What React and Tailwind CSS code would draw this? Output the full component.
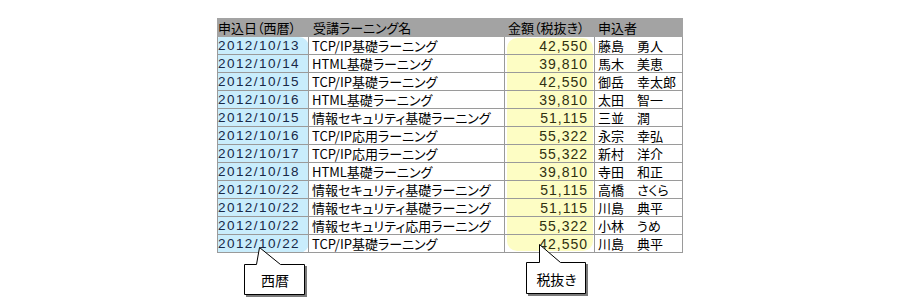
import React from "react";

const rows = [
  ["2012/10/13", "TCP/IP基礎ラーニング", "42,550", "藤島　勇人"],
  ["2012/10/14", "HTML基礎ラーニング", "39,810", "馬木　美恵"],
  ["2012/10/15", "TCP/IP基礎ラーニング", "42,550", "御岳　幸太郎"],
  ["2012/10/16", "HTML基礎ラーニング", "39,810", "太田　智一"],
  ["2012/10/15", "情報セキュリティ基礎ラーニング", "51,115", "三並　潤"],
  ["2012/10/16", "TCP/IP応用ラーニング", "55,322", "永宗　幸弘"],
  ["2012/10/17", "TCP/IP応用ラーニング", "55,322", "新村　洋介"],
  ["2012/10/18", "HTML基礎ラーニング", "39,810", "寺田　和正"],
  ["2012/10/22", "情報セキュリティ基礎ラーニング", "51,115", "高橋　さくら"],
  ["2012/10/22", "情報セキュリティ基礎ラーニング", "51,115", "川島　典平"],
  ["2012/10/22", "情報セキュリティ応用ラーニング", "55,322", "小林　うめ"],
  ["2012/10/22", "TCP/IP基礎ラーニング", "42,550", "川島　典平"],
];

const font = "font-['Noto_Sans_CJK_JP','Noto_Sans',sans-serif]";
const latin = "font-['Liberation_Sans','Noto_Sans_CJK_JP',sans-serif]";

export default function App() {
  return (
    <div className={`relative w-[900px] h-[297px] bg-white overflow-hidden ${font} text-black [font-feature-settings:'palt']`}>
      <div className="pl-[217px] pt-[18px]">
        <div className="relative w-[466px]">
          {/* highlight overlays */}
          <div className="absolute left-0 top-[19px] w-[92px] h-[216px] bg-[#c9edfc] rounded-r-[10px] rounded-tl-[3px]" />
          <div className="absolute left-[290px] top-[20px] w-[86px] h-[213px] bg-[#fdfdc4] rounded-[10px]" />

          <div className="relative grid grid-cols-[92px_196px_90px_88px] h-[19px] bg-[#a3a3a3] text-[13px] leading-[19px]">
            <div className="pl-[1px] whitespace-nowrap">申込日（西暦）</div>
            <div className="pl-[4px] whitespace-nowrap">受講ラーニング名</div>
            <div className="pl-[3px] whitespace-nowrap">金額（税抜き）</div>
            <div className="pl-[3px] whitespace-nowrap">申込者</div>
          </div>
          <div className="relative border-l border-[#9a9a9a]">
            {rows.map((r, i) => (
              <div
                key={i}
                className="grid grid-cols-[91px_196px_90px_88px] h-[18px] border-b border-[#9a9a9a] text-[13px] leading-[17px]"
              >
                <div className={`border-r border-[#9a9a9a] flex items-center ${latin} text-[13.5px] leading-none tracking-[1.45px] text-[#182848] whitespace-nowrap`}>{r[0]}</div>
                <div className="border-r border-[#9a9a9a] pl-[3px] whitespace-nowrap">{r[1]}</div>
                <div className={`border-r border-[#9a9a9a] flex items-center justify-end pr-[6px] ${latin} text-[14px] leading-none tracking-[1px] text-[#303010]`}>{r[2]}</div>
                <div className="border-r border-[#9a9a9a] pl-[3px] whitespace-nowrap">{r[3]}</div>
              </div>
            ))}
          </div>
        </div>
      </div>

      {/* callouts */}
      <svg className="absolute left-0 top-0" width="900" height="297">
        <path d="M246,266 L258,266 L261,249 L282,266 L307,266 L307,297 L246,297 Z" fill="#7a7a7a" />
        <path d="M244.5,264.5 L256.5,264.5 L259.5,247.5 L280.5,264.5 L304.5,264.5 L304.5,294.5 L244.5,294.5 Z" fill="#fff" stroke="#000" strokeWidth="1" />
        <path d="M528,264 L541,264 L541,246 L562,264 L588,264 L588,296 L528,296 Z" fill="#7a7a7a" />
        <path d="M526.5,262.5 L539.5,262.5 L539.5,244.5 L560.5,262.5 L585.5,262.5 L585.5,293.5 L526.5,293.5 Z" fill="#fff" stroke="#000" strokeWidth="1" />
      </svg>
      <div className="absolute left-[245px] top-[265px] w-[60px] h-[30px] flex items-center justify-center text-[14px] leading-none">西暦</div>
      <div className="absolute left-[527px] top-[263px] w-[59px] h-[31px] flex items-center justify-center text-[14px] leading-none">税抜き</div>
    </div>
  );
}
